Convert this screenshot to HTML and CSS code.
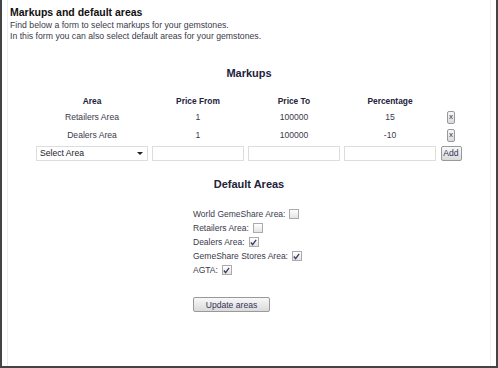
FILE: index.html
```html
<!DOCTYPE html>
<html>
<head>
    <meta name="viewport" content="width=device-width, initial-scale=1.0">
    <link rel="stylesheet" href="styles.css">
</head>
<body>

<div class="frame">
    <div class="page">
        <h1 class="title">Markups and default areas</h1>
        <p class="intro">Find below a form to select markups for your gemstones.<br>
        In this form you can also select default areas for your gemstones.</p>

        <h2 class="section-title markups-title">Markups</h2>

        <table class="markups">
            <tr class="head-row">
                <th class="col-area">Area</th>
                <th>Price From</th>
                <th>Price To</th>
                <th>Percentage</th>
                <th class="col-action"></th>
            </tr>
            <tr>
                <td>Retailers Area</td>
                <td>1</td>
                <td>100000</td>
                <td>15</td>
                <td><button class="btn btn-x">x</button></td>
            </tr>
            <tr>
                <td>Dealers Area</td>
                <td>1</td>
                <td>100000</td>
                <td>-10</td>
                <td><button class="btn btn-x">x</button></td>
            </tr>
            <tr class="input-row">
                <td>
                    <div class="select-box">
                        <span>Select Area</span>
                        <span class="arrow"></span>
                    </div>
                </td>
                <td><input type="text" class="field"></td>
                <td><input type="text" class="field"></td>
                <td><input type="text" class="field"></td>
                <td><button class="btn btn-add">Add</button></td>
            </tr>
        </table>

        <h2 class="section-title areas-title">Default Areas</h2>

        <div class="areas">
            <div class="area-row">World GemeShare Area: <span class="check"></span></div>
            <div class="area-row">Retailers Area: <span class="check"></span></div>
            <div class="area-row">Dealers Area: <span class="check"><svg width="7" height="7" viewBox="0 0 8 8"><path d="M1 4 L3 6.5 L7 1" fill="none" stroke="#3a3a6a" stroke-width="1.5"/></svg></span></div>
            <div class="area-row">GemeShare Stores Area: <span class="check"><svg width="7" height="7" viewBox="0 0 8 8"><path d="M1 4 L3 6.5 L7 1" fill="none" stroke="#3a3a6a" stroke-width="1.5"/></svg></span></div>
            <div class="area-row">AGTA: <span class="check"><svg width="7" height="7" viewBox="0 0 8 8"><path d="M1 4 L3 6.5 L7 1" fill="none" stroke="#3a3a6a" stroke-width="1.5"/></svg></span></div>

            <button class="btn btn-update">Update areas</button>
        </div>
    </div>
</div>

</body>
</html>
```

FILE: styles.css
```css
body {
    margin: 0;
    padding: 0;
    font-family: "Liberation Sans", Arial, sans-serif;
    background-color: #fff;
}

.frame {
    width: 498px;
    height: 368px;
    box-sizing: border-box;
    border: 2px solid #444;
    border-top: none;
    background-color: #fff;
}

.page {
    height: 100%;
    margin: 0 5px;
    border-left: 1px solid #eee;
    border-right: 1px solid #f2f2f2;
    padding: 5px 2px 0 2px;
    box-sizing: border-box;
    color: #3a3a4c;
}

.title {
    margin: 0;
    font-size: 10.5px;
    line-height: 15px;
    color: #111;
}

.intro {
    margin: 0;
    font-size: 8.7px;
    line-height: 11px;
}

.section-title {
    margin: 0;
    text-align: center;
    font-size: 11px;
    line-height: 15px;
    color: #22223a;
}

.markups-title {
    margin-top: 24px;
}

.areas-title {
    margin-top: 15px;
}

.markups {
    margin: 13px auto 0 auto;
    border-collapse: collapse;
    font-size: 8.6px;
}

.markups th {
    width: 96px;
    height: 14px;
    padding: 0;
    font-weight: bold;
    font-size: 8.4px;
    text-align: center;
    color: #22223a;
}

.markups th.col-area {
    width: 116px;
}

.markups th.col-action {
    width: 26px;
}

.markups td {
    height: 18px;
    padding: 0;
    text-align: center;
}

.markups .input-row td {
    padding: 0 2px;
}

.select-box {
    display: flex;
    justify-content: space-between;
    align-items: center;
    height: 15px;
    box-sizing: border-box;
    border: 1px solid #ddd;
    padding: 0 4px 0 3px;
    background-color: #fff;
    font-size: 8.6px;
    color: #222;
    text-align: left;
}

.arrow {
    width: 0;
    height: 0;
    border-left: 3px solid transparent;
    border-right: 3px solid transparent;
    border-top: 3px solid #222;
}

.field {
    display: block;
    width: 100%;
    height: 15px;
    box-sizing: border-box;
    border: 1px solid #ddd;
    margin: 0;
    padding: 0;
}

.btn {
    font-family: "Liberation Sans", Arial, sans-serif;
    font-size: 8.6px;
    color: #33335a;
    border: 1px solid #999;
    border-radius: 2px;
    background: linear-gradient(#f8f8f8, #dadada);
    padding: 0;
    cursor: pointer;
}

.btn-x {
    width: 8px;
    height: 13px;
    font-size: 8px;
    line-height: 10px;
}

.btn-add {
    width: 21px;
    height: 15px;
    line-height: 12px;
}

.areas {
    margin: 15px 0 0 183px;
    font-size: 8.5px;
}

.area-row {
    display: flex;
    align-items: center;
    height: 14px;
    white-space: nowrap;
}

.check {
    display: inline-flex;
    align-items: center;
    justify-content: center;
    width: 8px;
    height: 8px;
    margin-left: 4px;
    border: 1px solid #aaa;
    background: linear-gradient(#fff, #e4e4e4);
}

.btn-update {
    display: block;
    width: 77px;
    height: 15px;
    margin-top: 20px;
    line-height: 12px;
}
```
